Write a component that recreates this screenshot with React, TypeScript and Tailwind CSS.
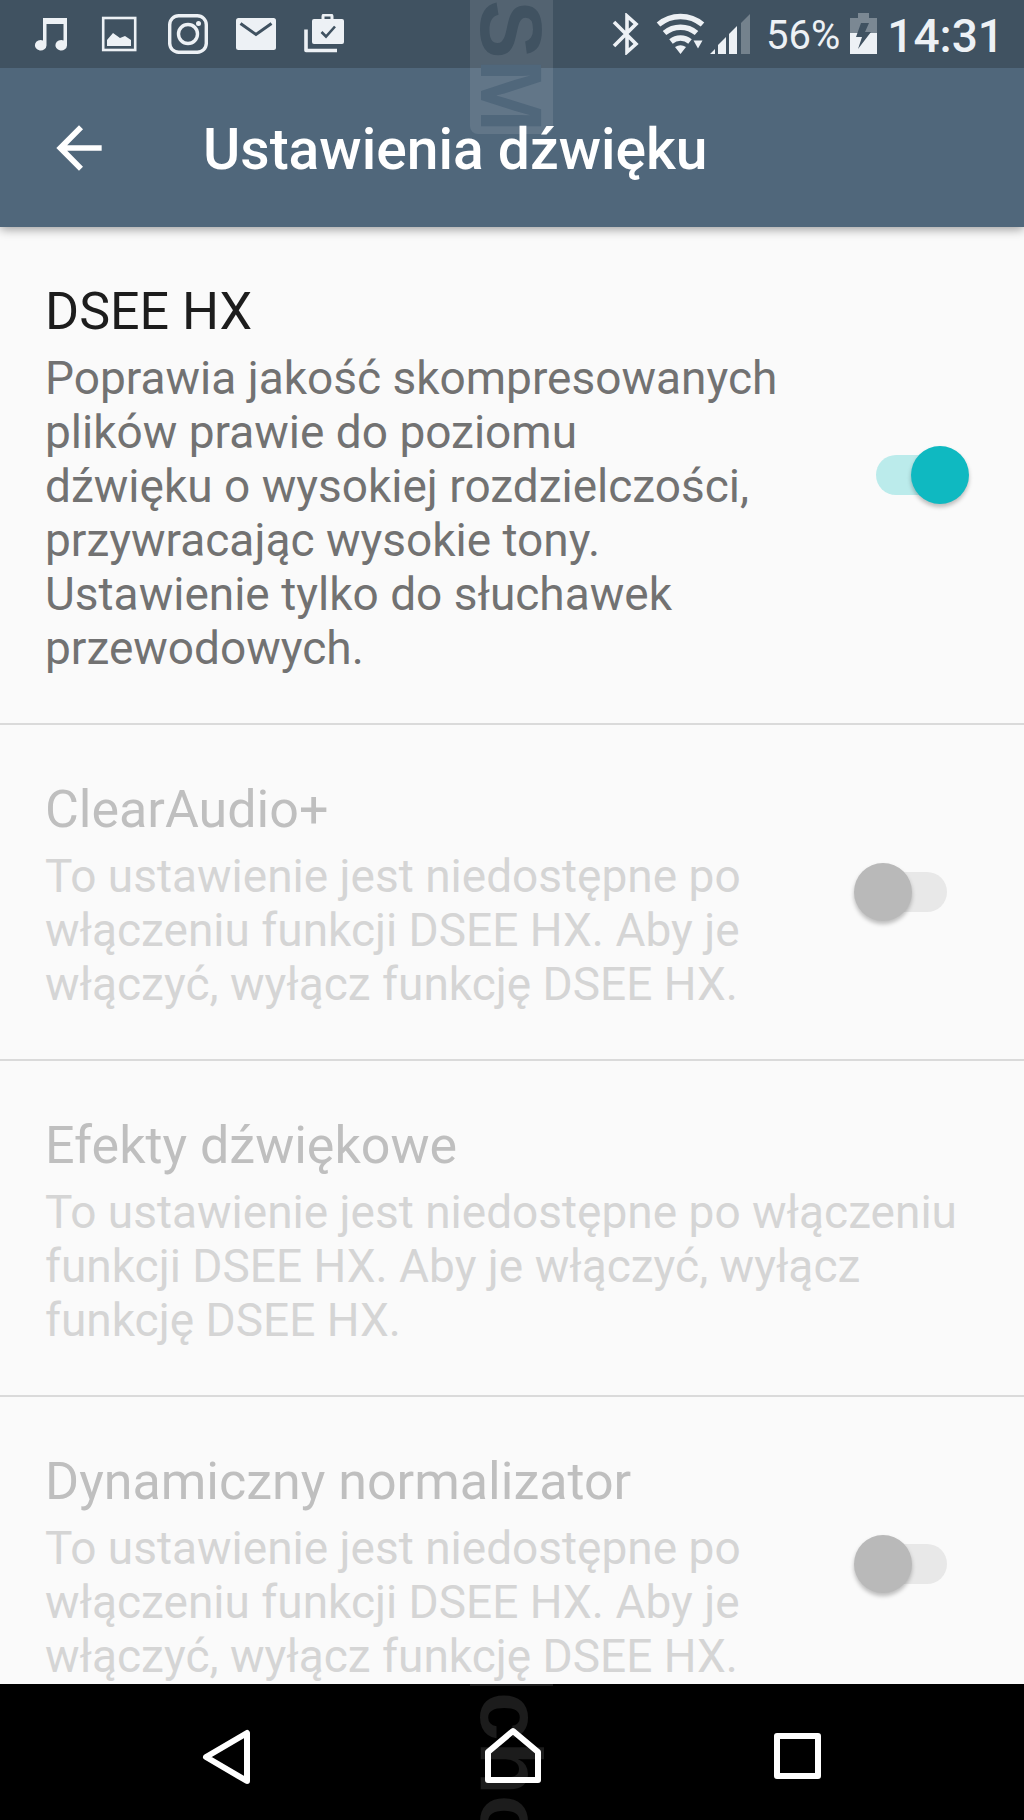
import React, { useState } from 'react';

type Setting = {
  id: string;
  title: string;
  description: string;
  hasSwitch: boolean;
  disabled: boolean;
};

const UNAVAILABLE =
  'To ustawienie jest niedostępne po włączeniu funkcji DSEE HX. Aby je włączyć, wyłącz funkcję DSEE HX.';

const settings: Setting[] = [
  {
    id: 'dsee',
    title: 'DSEE HX',
    description:
      'Poprawia jakość skompresowanych plików prawie do poziomu dźwięku\u00a0o\u00a0wysokiej rozdzielczości, przywracając wysokie tony. Ustawienie tylko do słuchawek przewodowych.',
    hasSwitch: true,
    disabled: false,
  },
  { id: 'clearaudio', title: 'ClearAudio+', description: UNAVAILABLE, hasSwitch: true, disabled: true },
  { id: 'effects', title: 'Efekty dźwiękowe', description: UNAVAILABLE, hasSwitch: false, disabled: true },
  { id: 'normalizer', title: 'Dynamiczny normalizator', description: UNAVAILABLE, hasSwitch: true, disabled: true },
];

const StatusBar = () => (
  <div className="flex h-[68px] items-center justify-between bg-[#405261] pl-8 pr-5 text-[#edf1f5]">
    <div className="flex items-center gap-7">
      <svg className="size-10" viewBox="0 0 40 40" fill="currentColor">
        <path d="M11 4h24v27.500a5.800 5.200 0 1 1-3.500-5V10H14.500v21.500a5.800 5.200 0 1 1-3.500-5z" />
      </svg>
      <svg className="size-10" viewBox="0 0 40 40" fill="none">
        <rect x="3.200" y="4" width="32" height="32" stroke="currentColor" strokeWidth="2.600" />
        <path d="M7 32V26l6-7 7 5 5-2 6 4v6z" fill="currentColor" />
      </svg>
      <svg className="size-10" viewBox="0 0 40 40" fill="none" stroke="currentColor" strokeWidth="3.400">
        <rect x="1.700" y="1.700" width="36.600" height="36.600" rx="9" />
        <circle cx="20" cy="20" r="9.500" />
        <circle cx="30.500" cy="9.500" r="2.500" fill="currentColor" stroke="none" />
      </svg>
      <svg className="size-10" viewBox="0 0 40 40">
        <rect x="0" y="4" width="40" height="32" rx="2.500" fill="currentColor" />
        <path d="M4.500 9.500L20 20.500l15.500-11" fill="none" stroke="#405261" strokeWidth="3" />
      </svg>
      <svg className="size-10" viewBox="0 0 40 40" fill="none">
        <path d="M2 15.500v21h31" stroke="currentColor" strokeWidth="3.600" strokeLinejoin="round" />
        <rect x="8" y="5" width="32" height="25" rx="2" fill="currentColor" />
        <path d="M19 6V2.500q0-1.500 1.500-1.500h6q1.500 0 1.500 1.500V6" stroke="currentColor" strokeWidth="3" />
        <path d="M17.500 18l4.500 4.500 9-10" stroke="#405261" strokeWidth="2.600" />
      </svg>
    </div>
    <div className="flex items-center">
      <svg className="h-[42px] w-7" viewBox="0 0 28 42" fill="none" stroke="currentColor" strokeWidth="3.600">
        <path d="M2 9l22 22-9 8V3l9 8L2 33" />
      </svg>
      <svg className="ml-4 h-[42px] w-[50px]" viewBox="0 0 50 42" fill="none" stroke="currentColor" strokeWidth="5.500">
        <path d="M2.500 11.500a34 34 0 0 1 44 0" />
        <path d="M8.500 20a25 25 0 0 1 32 0" />
        <path d="M15 28.500a15 15 0 0 1 19 0" />
        <path d="M19 34q5.500-3.500 11 0l-5.500 7zM37.500 27.500h9l-4.500 8z" fill="currentColor" stroke="none" />
      </svg>
      <svg className="ml-1 h-[42px] w-10" viewBox="0 0 40 42" fill="currentColor">
        <path d="M0 41l5-5v5zM8 32l8-8v17H8zM19 21l8-8v28h-8z" />
        <path d="M31 10l9-9v40h-9z" opacity=".3" />
      </svg>
      <span className="ml-4 pt-1 text-[40px] leading-[46px]">56%</span>
      <svg className="ml-2.5 h-[42px] w-[27px]" viewBox="0 0 27 42">
        <path d="M0 5h8V0h11v5h8v15H0z" fill="#7b8893" />
        <path d="M0 20h27v21H0z" fill="currentColor" />
        <path d="M11 10h8l-4 9h6L8 36l4-12H6z" fill="#405261" />
      </svg>
      <span className="ml-2.5 pt-1 text-[46px] font-medium leading-[54px]">14:31</span>
    </div>
  </div>
);

const AppBar = () => (
  <header className="flex h-[159px] items-center bg-[#50677b] pl-[45px] text-white">
    <button type="button" aria-label="Wstecz" className="size-[68px]">
      <svg viewBox="0 0 24 24" fill="currentColor">
        <path d="M20 11H7.830l5.590-5.590L12 4l-8 8 8 8 1.410-1.410L7.830 13H20v-2z" />
      </svg>
    </button>
    <h1 className="relative z-10 ml-[90px] pt-1 text-[57px] font-medium leading-[66px]">Ustawienia dźwięku</h1>
  </header>
);

type RowProps = {
  setting: Setting;
  checked: boolean;
  onToggle: (checked: boolean) => void;
};

const SettingRow: React.FC<RowProps> = ({ setting, checked, onToggle }) => {
  const { id, title, description, hasSwitch, disabled } = setting;
  const titleClass = `block text-[52px] leading-[62px] ${disabled ? 'text-[#bfbfbf]' : 'text-[#1d1d1d]'}`;

  return (
    <li className="flex items-center border-b-2 border-[#dadada] py-12 pl-[45px] pr-[55px]">
      <div className="min-w-0 flex-1 pt-1.5">
        {hasSwitch ? (
          <label htmlFor={id} className={titleClass}>
            {title}
          </label>
        ) : (
          <h2 className={titleClass}>{title}</h2>
        )}
        <p className={`mt-2 text-[46px] leading-[54px] ${disabled ? 'text-[#d5d5d5]' : 'text-[#727272]'}`}>
          {description}
        </p>
      </div>
      {hasSwitch && (
        <input
          id={id}
          type="checkbox"
          role="switch"
          checked={checked}
          disabled={disabled}
          onChange={(e) => onToggle(e.target.checked)}
          className="relative ml-12 h-[58px] w-[115px] shrink-0 appearance-none before:absolute before:left-[22px] before:top-[9px] before:h-10 before:w-[71px] before:rounded-full before:bg-[#e8e8e8] after:absolute after:left-0 after:top-0 after:size-[58px] after:rounded-full after:bg-[#b9b9b9] after:shadow-[0_3px_4px_rgba(0,0,0,0.25)] checked:before:bg-[#bbebeb] checked:after:left-[57px] checked:after:bg-[#0fb9c1]"
        />
      )}
    </li>
  );
};

const NavBar = () => (
  <nav className="relative flex h-[136px] shrink-0 items-center overflow-hidden bg-black px-[84px] text-white">
    <div className="pointer-events-none absolute left-1/2 top-0 -ml-[42px] w-[83px] border-t-2 border-[#1c1c1c] pt-1.5 font-['Liberation_Sans',sans-serif] text-[88px] font-bold leading-[83px] text-[#1c1c1c] [writing-mode:vertical-rl]">
      cho
    </div>
    <button type="button" aria-label="Wstecz" className="relative flex flex-1 justify-center">
      <svg className="size-16" viewBox="0 0 64 64" fill="none" stroke="currentColor" strokeWidth="6" strokeLinejoin="round">
        <path d="M52 13v48L11 37z" />
      </svg>
    </button>
    <button type="button" aria-label="Ekran główny" className="relative flex flex-1 justify-center">
      <svg className="size-16" viewBox="0 0 64 64" fill="none" stroke="currentColor" strokeWidth="6" strokeLinejoin="round">
        <path d="M8 60V32L33 11l25 21v28z" />
      </svg>
    </button>
    <button type="button" aria-label="Ostatnie" className="relative flex flex-1 justify-center">
      <svg className="size-16" viewBox="0 0 64 64" fill="none" stroke="currentColor" strokeWidth="6" strokeLinejoin="round">
        <rect x="12" y="16" width="41" height="40" />
      </svg>
    </button>
  </nav>
);

export default function App() {
  const [enabled, setEnabled] = useState<Record<string, boolean>>({ dsee: true });

  return (
    <div className="flex h-screen flex-col overflow-hidden bg-[#fafafa] font-['Roboto',sans-serif]">
      <div className="relative z-10 shrink-0 shadow-[0_2px_10px_rgba(0,0,0,0.4)]">
        <StatusBar />
        <AppBar />
        {/* watermark label, sits under the title text */}
        <div className="pointer-events-none absolute left-1/2 top-0 -ml-[42px] h-[134px] w-[83px] rounded-b-lg bg-white/10 font-['Liberation_Sans',sans-serif] text-[88px] font-bold leading-[83px] text-[#50677b] [writing-mode:vertical-rl]">
          <span className="text-[#405261]">S</span>M
        </div>
      </div>
      <ul className="min-h-0 flex-1 overflow-y-auto [scrollbar-width:none]">
        {settings.map((setting) => (
          <SettingRow
            key={setting.id}
            setting={setting}
            checked={!!enabled[setting.id]}
            onToggle={(value) => setEnabled({ ...enabled, [setting.id]: value })}
          />
        ))}
      </ul>
      <NavBar />
    </div>
  );
}
